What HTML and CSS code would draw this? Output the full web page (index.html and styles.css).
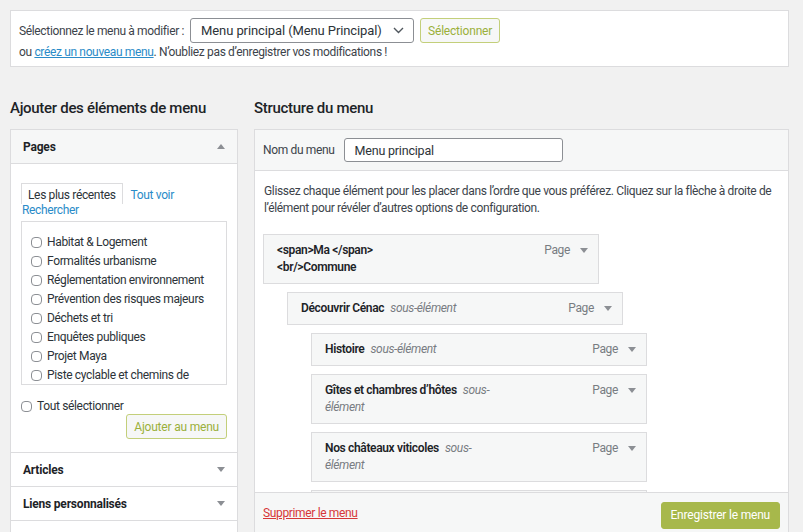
FILE: index.html
```html
<!DOCTYPE html>
<html lang="fr">
<head>
    <meta charset="UTF-8">
    <meta name="viewport" content="width=device-width, initial-scale=1.0">
    <title>Menus</title>
    <link rel="stylesheet" href="styles.css">
</head>
<body>

    <div class="wrap">

        <!-- Choix du menu -->
        <div class="manage-menus">
            <div class="select-row">
                <label class="select-label">Sélectionnez le menu à modifier :</label>
                <div class="select">
                    <span>Menu principal (Menu Principal)</span>
                    <svg class="chevron" width="11" height="7" viewBox="0 0 11 7"><polyline points="1,1 5.5,5.5 10,1" fill="none" stroke="#50575e" stroke-width="1.4"/></svg>
                </div>
                <button class="btn btn-secondary">Sélectionner</button>
            </div>
            <p class="hint">ou <a href="#">créez un nouveau menu</a>. N’oubliez pas d’enregistrer vos modifications !</p>
        </div>

        <div class="columns">

            <!-- Colonne gauche -->
            <div class="col-left">
                <h2>Ajouter des éléments de menu</h2>
                <div class="accordion">
                    <div class="section">
                        <div class="section-title">Pages <span class="arrow arrow-up"></span></div>
                        <div class="section-body">
                            <div class="tabs">
                                <span class="tab">Les plus récentes</span>
                                <a href="#" class="tab-link">Tout voir</a>
                            </div>
                            <a href="#" class="tab-link search-link">Rechercher</a>
                            <div class="page-list">
                                <label class="check"><input type="checkbox"> Habitat &amp; Logement</label>
                                <label class="check"><input type="checkbox"> Formalités urbanisme</label>
                                <label class="check"><input type="checkbox"> Réglementation environnement</label>
                                <label class="check"><input type="checkbox"> Prévention des risques majeurs</label>
                                <label class="check"><input type="checkbox"> Déchets et tri</label>
                                <label class="check"><input type="checkbox"> Enquêtes publiques</label>
                                <label class="check"><input type="checkbox"> Projet Maya</label>
                                <label class="check"><input type="checkbox"> Piste cyclable et chemins de randonnée</label>
                                <label class="check"><input type="checkbox"> Vie associative</label>
                            </div>
                            <label class="check select-all"><input type="checkbox"> Tout sélectionner</label>
                            <div class="add-row">
                                <button class="btn btn-secondary">Ajouter au menu</button>
                            </div>
                        </div>
                    </div>
                    <div class="section">
                        <div class="section-title">Articles <span class="arrow"></span></div>
                    </div>
                    <div class="section">
                        <div class="section-title">Liens personnalisés <span class="arrow"></span></div>
                    </div>
                    <div class="section">
                        <div class="section-title">Catégories <span class="arrow"></span></div>
                    </div>
                </div>
            </div>

            <!-- Colonne droite -->
            <div class="col-right">
                <h2>Structure du menu</h2>
                <div class="menu-edit">
                    <div class="menu-header">
                        <label class="name-label">Nom du menu</label>
                        <div class="name-input">Menu principal</div>
                    </div>
                    <div class="menu-body">
                        <p class="drag-hint">Glissez chaque élément pour les placer dans l’ordre que vous préférez. Cliquez sur la flèche à droite de l’élément pour révéler d’autres options de configuration.</p>

                        <div class="menu-item">
                            <span class="item-title"><b>&lt;span&gt;Ma &lt;/span&gt; &lt;br/&gt;Commune</b></span>
                            <span class="item-type">Page</span><span class="arrow"></span>
                        </div>
                        <div class="menu-item depth-1">
                            <span class="item-title"><b>Découvrir Cénac</b><i>sous-élément</i></span>
                            <span class="item-type">Page</span><span class="arrow"></span>
                        </div>
                        <div class="menu-item depth-2">
                            <span class="item-title"><b>Histoire</b><i>sous-élément</i></span>
                            <span class="item-type">Page</span><span class="arrow"></span>
                        </div>
                        <div class="menu-item depth-2">
                            <span class="item-title"><b>Gîtes et chambres d’hôtes</b><i>sous-élément</i></span>
                            <span class="item-type">Page</span><span class="arrow"></span>
                        </div>
                        <div class="menu-item depth-2">
                            <span class="item-title"><b>Nos châteaux viticoles</b><i>sous-élément</i></span>
                            <span class="item-type">Page</span><span class="arrow"></span>
                        </div>
                        <div class="menu-item depth-2">
                            <span class="item-title"><b>Gastronomie</b><i>sous-élément</i></span>
                            <span class="item-type">Page</span><span class="arrow"></span>
                        </div>
                    </div>
                    <div class="menu-footer">
                        <a href="#" class="delete-link">Supprimer le menu</a>
                        <button class="btn btn-primary">Enregistrer le menu</button>
                    </div>
                </div>
            </div>

        </div>
    </div>

</body>
</html>
```

FILE: styles.css
```css
body {
    margin: 0;
    background-color: #f1f1f1;
    font-family: Roboto, "Liberation Sans", Arial, sans-serif;
    font-size: 12px;
    letter-spacing: -0.35px;
    color: #3c434a;
}
a {
    color: #2a8bc8;
}
.wrap {
    padding: 10px 14px 0 10px;
}

/* Choix du menu */
.manage-menus {
    background-color: white;
    border: 1px solid #dcdcde;
    padding: 7px 10px 5px 8px;
}
.select-row {
    display: flex;
    align-items: center;
    height: 25px;
}
.select-label {
    margin-right: 6px;
}
.select {
    width: 212px;
    height: 23px;
    border: 1px solid #8c8f94;
    border-radius: 3px;
    display: flex;
    align-items: center;
    justify-content: space-between;
    padding: 0 0 0 10px;
    font-size: 13px;
    letter-spacing: -0.1px;
    color: #2c3338;
}
.chevron {
    margin-right: 9px;
}
.btn {
    font-family: inherit;
    font-size: 12px;
    letter-spacing: -0.2px;
    height: 25px;
    padding: 0 7px;
    border-radius: 3px;
    cursor: pointer;
}
.btn-secondary {
    background-color: #f6f7f7;
    border: 1px solid #c3cf7a;
    color: #9bb03a;
}
.select-row .btn {
    margin-left: 6px;
}
.hint {
    margin: 1px 0 0;
    line-height: 17px;
}

/* Colonnes */
.columns {
    display: flex;
    gap: 16px;
    align-items: flex-start;
}
.col-left {
    width: 228px;
    flex-shrink: 0;
}
.col-right {
    flex: 1;
}
h2 {
    font-size: 15px;
    font-weight: 500;
    letter-spacing: -0.3px;
    color: #1d2327;
    line-height: 20px;
    margin: 31px 0 11px;
}

/* Accordéon */
.accordion {
    background-color: white;
    border: 1px solid #dcdcde;
    border-bottom: none;
}
.section {
    border-bottom: 1px solid #dcdcde;
}
.section-title {
    height: 33px;
    display: flex;
    align-items: center;
    justify-content: space-between;
    padding: 0 12px;
    font-weight: bold;
    letter-spacing: -0.2px;
    color: #1d2327;
}
.section:first-child .section-title {
    background-color: #f6f7f7;
    border-bottom: 1px solid #dcdcde;
}
.arrow {
    flex-shrink: 0;
    width: 0;
    height: 0;
    border-left: 4px solid transparent;
    border-right: 4px solid transparent;
    border-top: 5px solid #8c8f94;
}
.arrow-up {
    border-top: none;
    border-bottom: 5px solid #8c8f94;
}
.section-body {
    padding: 19px 10px 13px;
}
.tabs {
    display: flex;
    align-items: flex-end;
    height: 21px;
    line-height: 14px;
}
.tab {
    border: 1px solid #dcdcde;
    border-bottom: none;
    padding: 4px 6px 2px;
    color: #2c3338;
}
.tab-link {
    text-decoration: none;
    margin-left: 8px;
    padding-bottom: 2px;
}
.search-link {
    display: block;
    margin: -1px 0 0 1px;
    line-height: 14px;
}
.page-list {
    margin-top: 2px;
    height: 151px;
    overflow: hidden;
    border: 1px solid #dcdcde;
    padding: 11px 10px 0 9px;
}
.check {
    display: flex;
    align-items: flex-start;
    line-height: 19px;
    color: #2c3338;
}
.check input {
    appearance: none;
    flex-shrink: 0;
    width: 11px;
    height: 11px;
    margin: 4px 5px 0 0;
    border: 1px solid #8c8f94;
    border-radius: 4px;
    background-color: white;
}
.select-all {
    margin-top: 12px;
}
.add-row {
    display: flex;
    justify-content: flex-end;
    margin-top: -2px;
}

/* Structure du menu */
.menu-edit {
    background-color: white;
    border: 1px solid #dcdcde;
}
.menu-header {
    background-color: #f6f7f7;
    border-bottom: 1px solid #dcdcde;
    height: 40px;
    display: flex;
    align-items: center;
    padding: 0 8px;
}
.name-label {
    margin-right: 9px;
}
.name-input {
    width: 207px;
    height: 22px;
    border: 1px solid #8c8f94;
    border-radius: 3px;
    padding-left: 10px;
    display: flex;
    align-items: center;
    font-size: 12.5px;
    letter-spacing: -0.2px;
    color: #2c3338;
    background-color: white;
}
.menu-body {
    height: 321px;
    box-sizing: border-box;
    overflow: hidden;
    padding: 12px 8px 0;
}
.drag-hint {
    margin: 0 0 17px 1px;
    line-height: 17px;
}
.menu-item {
    width: 311px;
    background-color: #f6f7f7;
    border: 1px solid #dcdcde;
    padding: 7px 10px 7px 13px;
    margin-bottom: 8px;
    display: flex;
    align-items: flex-start;
    line-height: 17px;
}
.depth-1 {
    margin-left: 24px;
}
.depth-2 {
    margin-left: 48px;
}
.item-title {
    width: 172px;
    color: #1d2327;
}
.item-title b {
    font-weight: 600;
}
.item-title i {
    color: #787c82;
    margin-left: 6px;
}
.item-type {
    margin-left: auto;
    margin-right: 10px;
    color: #787c82;
}
.menu-item .arrow {
    margin-top: 6px;
}
.menu-footer {
    height: 39px;
    background-color: #f6f7f7;
    border-top: 1px solid #dcdcde;
    display: flex;
    align-items: center;
    justify-content: space-between;
    padding: 0 8px;
}
.delete-link {
    color: #d63638;
}
.btn-primary {
    background-color: #a7b84b;
    border: 1px solid #a7b84b;
    color: white;
    height: 27px;
    padding: 0 9px;
    margin-top: 5px;
}
```
